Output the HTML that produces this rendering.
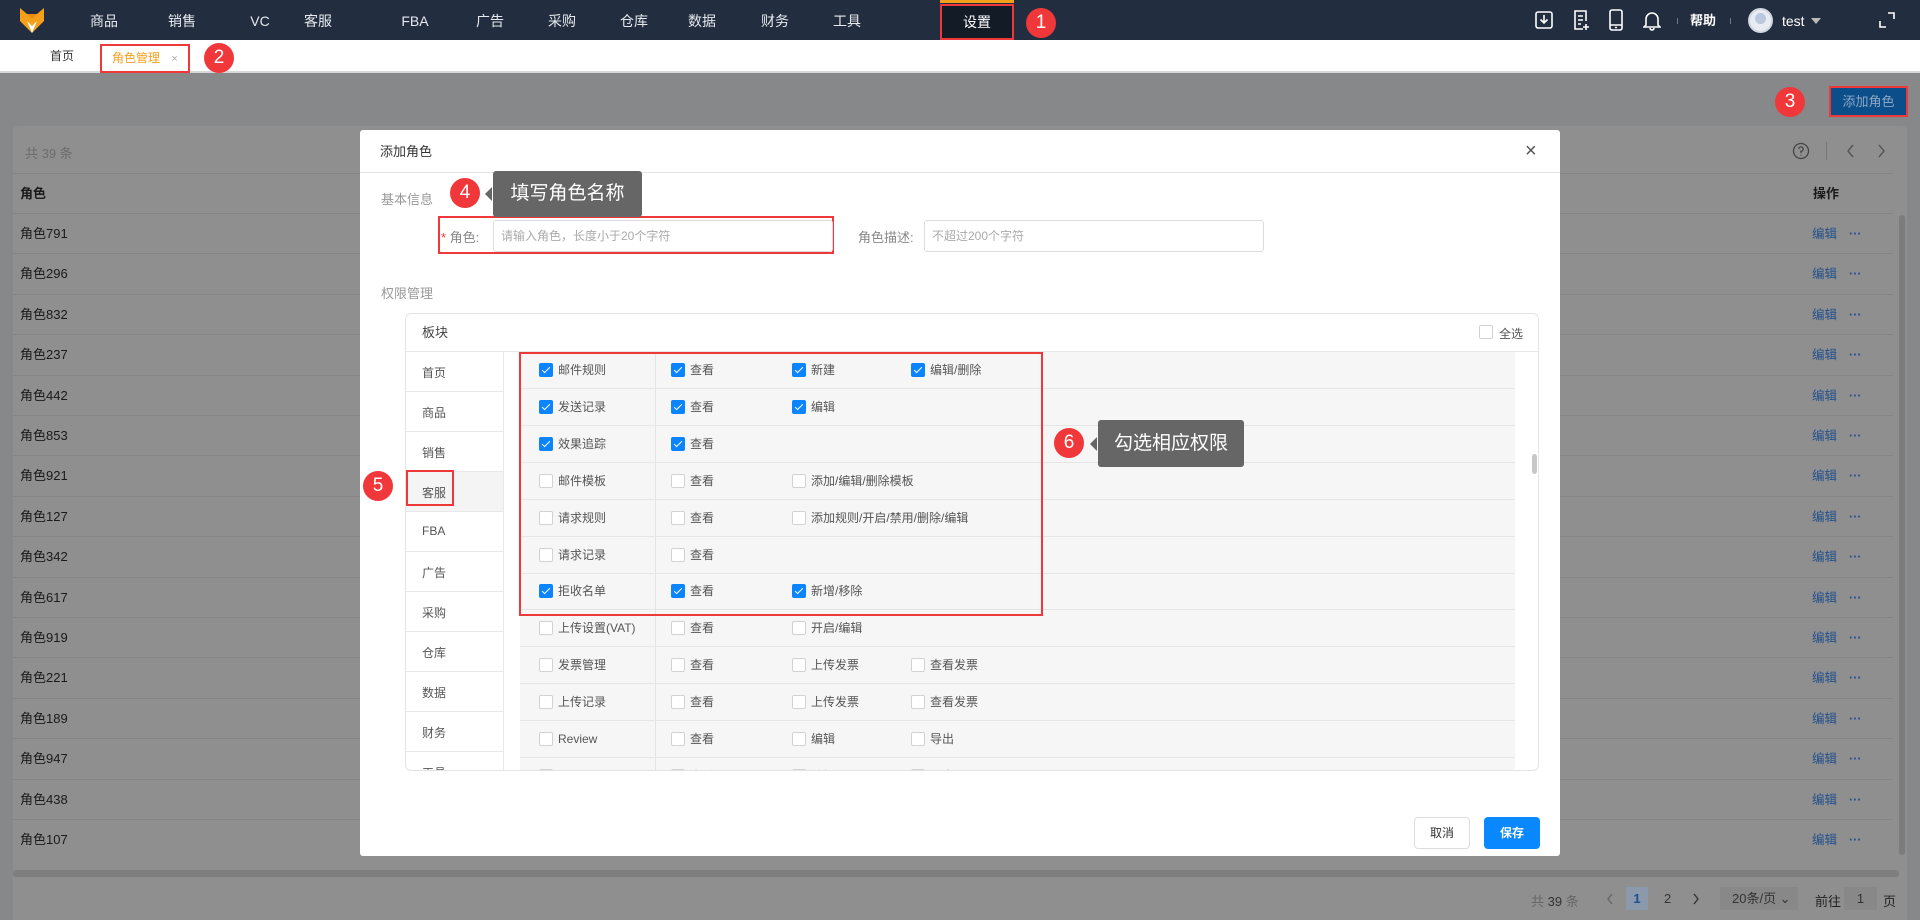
<!DOCTYPE html><html><head><meta charset="utf-8"><style>
*{margin:0;padding:0;box-sizing:border-box}
body{width:1920px;height:920px;position:relative;overflow:hidden;font-family:"Liberation Sans","Noto Sans CJK SC",sans-serif;font-size:13px;color:#333;background:#878889}
.a{position:absolute}
.nav{left:0;top:0;width:1920px;height:40px;background:#222d3f}
.ni{top:0;height:40px;line-height:42px;color:#e6e9ee;font-size:14px;transform:translateX(-50%)}
.tabs{left:0;top:40px;width:1920px;height:33px;background:#fff;border-bottom:2px solid #d8d8d8}
.circ{width:30px;height:30px;border-radius:50%;background:#f0373a;color:#fff;font-size:19px;text-align:center;line-height:30px;transform:translate(-50%,-50%)}
.card{left:13px;top:126px;width:1894px;height:794px;background:#8f8f8f;border-radius:4px}
.row{left:13px;width:1880px;height:40px;border-top:1px solid #858585;line-height:40px;padding-left:7px;color:#1a1a1a}
.ed{color:#23508c;font-size:12.5px}
.modal{left:360px;top:130px;width:1200px;height:726px;background:#fff;border-radius:3px}
.tip{background:#666;color:#fff;font-size:19px;border-radius:3px;text-align:center}
.tip:before{content:"";position:absolute;left:-8px;top:50%;margin-top:-7px;border:7px solid transparent;border-left:0;border-right-color:#666}
.cb{width:14px;height:14px;border:1px solid #d2d2d2;background:#fff;border-radius:2px}
.cb.on{background:#0a84ff;border-color:#0a84ff}
.cb.on:after{content:"";position:absolute;left:4px;top:1px;width:3px;height:7px;border:solid #fff;border-width:0 1.5px 1.5px 0;transform:rotate(45deg)}
.lt{color:#555;font-size:12px}
.red{border:2px solid #f0373a}
</style></head><body>
<div class="a nav">
<svg class="a" style="left:20px;top:8px" width="24" height="26" viewBox="0 0 24 26"><path d="M0 0L7 6H17L24 0V13L12 25L0 13Z" fill="#f5a01a"/><path d="M7 13L12 18L17 13L12 25Z" fill="#fff"/><path d="M7 6L12 11L17 6" fill="#e8891a"/></svg>
<div class="a ni" style="left:104px">商品</div><div class="a ni" style="left:182px">销售</div><div class="a ni" style="left:260px">VC</div><div class="a ni" style="left:318px">客服</div><div class="a ni" style="left:415px">FBA</div><div class="a ni" style="left:490px">广告</div><div class="a ni" style="left:562px">采购</div><div class="a ni" style="left:634px">仓库</div><div class="a ni" style="left:702px">数据</div><div class="a ni" style="left:775px">财务</div><div class="a ni" style="left:847px">工具</div>
<div class="a" style="left:940px;top:0;width:74px;height:3px;background:#f5a01a"></div>
<div class="a red" style="left:940px;top:4px;width:74px;height:36px;background:#131b27;color:#fff;font-size:14px;text-align:center;line-height:32px">设置</div>
<svg class="a" style="left:1534px;top:10px" width="20" height="20" viewBox="0 0 20 20" fill="none" stroke="#fff" stroke-width="1.6"><rect x="2" y="2" width="16" height="16" rx="2"/><path d="M10 5V13M6.5 9.5L10 13L13.5 9.5"/></svg>
<svg class="a" style="left:1572px;top:9px" width="20" height="22" viewBox="0 0 20 22" fill="none" stroke="#fff" stroke-width="1.6"><path d="M14 12V2H3V20H11M6 7H11M6 11H11M6 15H9M14 15V21M11 18H17"/></svg>
<svg class="a" style="left:1608px;top:9px" width="16" height="22" viewBox="0 0 16 22" fill="none" stroke="#fff" stroke-width="1.6"><rect x="2" y="1" width="12" height="20" rx="2"/><path d="M2 16H14M7 18.5H9"/></svg>
<svg class="a" style="left:1643px;top:9px" width="18" height="22" viewBox="0 0 18 22" fill="none" stroke="#fff" stroke-width="1.6"><path d="M3 16V10A6 6 0 0 1 15 10V16L17 18H1Z M7 19A2 2 0 0 0 11 19"/></svg>
<div class="a" style="left:1677px;top:18px;width:1px;height:6px;background:#778"></div>
<div class="a" style="left:1690px;top:0;line-height:42px;color:#fff;font-size:13px;font-weight:bold">帮助</div>
<div class="a" style="left:1730px;top:18px;width:1px;height:6px;background:#778"></div>
<div class="a" style="left:1748px;top:8px;width:25px;height:25px;border-radius:50%;background:#e8ecf2;border:2px solid #cfd6e0"><div class="a" style="left:5px;top:3px;width:11px;height:11px;border-radius:50%;background:#b9c8de"></div></div>
<div class="a" style="left:1782px;top:0;line-height:42px;color:#fff;font-size:14px">test</div>
<div class="a" style="left:1811px;top:18px;border:5px solid transparent;border-top:6px solid #bbb"></div>
<svg class="a" style="left:1878px;top:11px" width="18" height="18" viewBox="0 0 18 18" fill="none" stroke="#fff" stroke-width="1.6"><path d="M10 2H16V8M2 10V16H8"/></svg>
</div>
<div class="a circ" style="left:1041px;top:23px">1</div>
<div class="a tabs">
<div class="a" style="left:50px;top:0;line-height:33px;color:#333;font-size:12px">首页</div>
<div class="a red" style="left:100px;top:4px;width:90px;height:29px;line-height:25px;color:#f5a01a;font-size:12px;padding-left:10px">角色管理 <span style="color:#aaa;margin-left:8px;font-size:11px">×</span></div>
</div>
<div class="a circ" style="left:219px;top:58px">2</div>
<div class="a circ" style="left:1790px;top:102px">3</div>
<div class="a red" style="left:1829px;top:86px;width:79px;height:31px;background:#0b4e89;color:#8ca7c4;text-align:center;line-height:27px;font-size:13px">添加角色</div>
<div class="a card"></div>
<div class="a" style="left:25px;top:143px;color:#6c6c6c">共 39 条</div>
<svg class="a" style="left:1792px;top:142px" width="18" height="18" viewBox="0 0 18 18" fill="none" stroke="#444" stroke-width="1.3"><circle cx="9" cy="9" r="7.5"/><path d="M6.8 7A2.2 2.2 0 1 1 9 9.3V11M9 12.8V13.6"/></svg>
<div class="a" style="left:1826px;top:142px;width:1px;height:18px;background:#777"></div>
<svg class="a" style="left:1846px;top:144px" width="10" height="14" viewBox="0 0 10 14" fill="none" stroke="#555" stroke-width="1.4"><path d="M7 1L2 7L7 13"/></svg>
<svg class="a" style="left:1876px;top:144px" width="10" height="14" viewBox="0 0 10 14" fill="none" stroke="#555" stroke-width="1.4"><path d="M3 1L8 7L3 13"/></svg>
<div class="a row" style="top:173px;font-weight:bold">角色<span class="a" style="left:1800px">操作</span></div>
<div id="rows"></div>
<div class="a" style="left:1899px;top:215px;width:6px;height:640px;background:#7c7c7c;border-radius:3px"></div>
<div class="a" style="left:13px;top:870px;width:1886px;height:7px;background:#7e7e7e;border-radius:3px"></div>
<div class="a" style="left:13px;top:877px;width:1894px;height:43px;background:#8f8f8f"></div>
<div class="a" style="left:1531px;top:891px;color:#666">共 <span style="color:#333">39</span> 条</div>
<svg class="a" style="left:1606px;top:893px" width="8" height="12" viewBox="0 0 8 12" fill="none" stroke="#666" stroke-width="1.4"><path d="M6 1L2 6L6 11"/></svg>
<div class="a" style="left:1626px;top:887px;width:22px;height:23px;background:#8a99ab;color:#1d4f8c;text-align:center;line-height:23px;font-weight:bold">1</div>
<div class="a" style="left:1664px;top:891px;color:#333">2</div>
<svg class="a" style="left:1692px;top:893px" width="8" height="12" viewBox="0 0 8 12" fill="none" stroke="#333" stroke-width="1.4"><path d="M2 1L6 6L2 11"/></svg>
<div class="a" style="left:1720px;top:887px;width:78px;height:23px;background:#888;color:#333;padding-left:12px;line-height:23px">20条/页 ⌄</div>
<div class="a" style="left:1815px;top:891px;color:#222">前往</div>
<div class="a" style="left:1844px;top:887px;width:33px;height:23px;background:#888;text-align:center;line-height:23px;color:#333">1</div>
<div class="a" style="left:1883px;top:891px;color:#222">页</div>

<div class="a modal">
<div class="a" style="left:20px;top:0;line-height:43px;color:#333;font-size:13px">添加角色</div>
<div class="a" style="left:1165px;top:10px;font-size:20px;color:#555">×</div>
<div class="a" style="left:0;top:42px;width:1200px;height:1px;background:#e4e4e4"></div>
<div class="a" style="left:21px;top:59px;color:#999">基本信息</div>
<div class="a red" style="left:78px;top:86px;width:396px;height:38px"></div>
<div class="a" style="left:81px;top:97px;color:#888"><span style="color:#f33">*</span> 角色:</div>
<div class="a" style="left:133px;top:90px;height:32px;border:1px solid #ddd;border-radius:3px;color:#aaa;font-size:12px;padding-left:7px;line-height:30px;width:340px">请输入角色，长度小于20个字符</div>
<div class="a" style="left:498px;top:97px;color:#888">角色描述:</div>
<div class="a" style="left:564px;top:90px;width:340px;height:32px;border:1px solid #ddd;border-radius:3px;color:#aaa;font-size:12px;padding-left:7px;line-height:30px">不超过200个字符</div>
<div class="a" style="left:21px;top:153px;color:#999">权限管理</div>
<div class="a" style="left:45px;top:183px;width:1134px;height:458px;border:1px solid #e4e4e4;border-radius:6px;overflow:hidden">
 <div class="a" style="left:16px;top:0;line-height:37px;color:#444">板块</div>
 <div class="a cb" style="left:1073px;top:11px"></div><div class="a lt" style="left:1093px;top:11px">全选</div>
 <div class="a" style="left:0;top:37px;width:1134px;height:1px;background:#e8e8e8"></div>
 <div class="a" style="left:97px;top:37px;width:1px;height:421px;background:#e8e8e8"></div>
 <div id="cats"></div>
 <div class="a" style="left:114px;top:38px;width:995px;height:420px;background:#f6f6f6"></div>
 <div class="a" style="left:249px;top:38px;width:1px;height:420px;background:#e4e4e4"></div>
 <div id="perm"></div>
 <div class="a" style="left:1126px;top:140px;width:5px;height:20px;background:#c8c8c8;border-radius:3px"></div>
</div>
<div class="a" style="left:1054px;top:687px;width:56px;height:32px;border:1px solid #ddd;border-radius:4px;text-align:center;line-height:30px;font-size:12px">取消</div>
<div class="a" style="left:1124px;top:687px;width:56px;height:32px;background:#0a88ff;color:#fff;border-radius:4px;text-align:center;line-height:32px;font-size:12px;font-weight:bold">保存</div>
</div>
<div class="a red" style="left:406px;top:470px;width:48px;height:36px"></div>
<div class="a red" style="left:519px;top:352px;width:524px;height:264px"></div>
<div class="a circ" style="left:465px;top:193px">4</div>
<div class="a tip" style="left:493px;top:171px;width:149px;height:46px;line-height:46px">填写角色名称</div>
<div class="a circ" style="left:378px;top:486px">5</div>
<div class="a circ" style="left:1069px;top:443px">6</div>
<div class="a tip" style="left:1098px;top:420px;width:146px;height:47px;line-height:47px">勾选相应权限</div>
<script>
var r=['791','296','832','237','442','853','921','127','342','617','919','221','189','947','438','107'],h='';
r.forEach(function(n,i){var t=213+i*40.4;h+='<div class="a row" style="top:'+t+'px">角色'+n+'<span class="a ed" style="left:1799px">编辑</span><span class="a ed" style="left:1836px;font-weight:bold">···</span></div>'});
document.getElementById('rows').innerHTML=h;
var c=['首页','商品','销售','客服','FBA','广告','采购','仓库','数据','财务','工具'],s='';
c.forEach(function(n,i){var t=38+i*40;s+='<div class="a" style="left:0;top:'+t+'px;width:97px;height:40px;border-bottom:1px solid #e8e8e8;'+(i==3?'background:#f4f4f4;':'')+'"><span class="a lt" style="left:16px;top:12px">'+n+'</span></div>'});
document.getElementById('cats').innerHTML=s;
var P=[[1,'邮件规则',1,1,'新建',1,'编辑/删除'],[1,'发送记录',1,1,'编辑'],[1,'效果追踪',1],[0,'邮件模板',0,0,'添加/编辑/删除模板'],[0,'请求规则',0,0,'添加规则/开启/禁用/删除/编辑'],[0,'请求记录',0],[1,'拒收名单',1,1,'新增/移除'],[0,'上传设置(VAT)',0,0,'开启/编辑'],[0,'发票管理',0,0,'上传发票',0,'查看发票'],[0,'上传记录',0,0,'上传发票',0,'查看发票'],[0,'Review',0,0,'编辑',0,'导出'],[0,'Feedback',0,0,'编辑',0,'导出']],q='';
function cb(x,y,on,l){return '<div class="a cb'+(on?' on':'')+'" style="left:'+x+'px;top:'+y+'px"></div><span class="a lt" style="left:'+(x+19)+'px;top:'+(y-1)+'px;line-height:16px">'+l+'</span>'}
P.forEach(function(p,i){var y=38+i*36.9,cy=y+11;q+='<div class="a" style="left:114px;top:'+(y+36)+'px;width:995px;height:1px;background:#e6e6e6"></div>';
q+=cb(133,cy,p[0],p[1])+cb(265,cy,p[2],'查看');if(p.length>3)q+=cb(386,cy,p[3],p[4]);if(p.length>5)q+=cb(505,cy,p[5],p[6]);});
document.getElementById('perm').innerHTML=q;
</script>
</body></html>
